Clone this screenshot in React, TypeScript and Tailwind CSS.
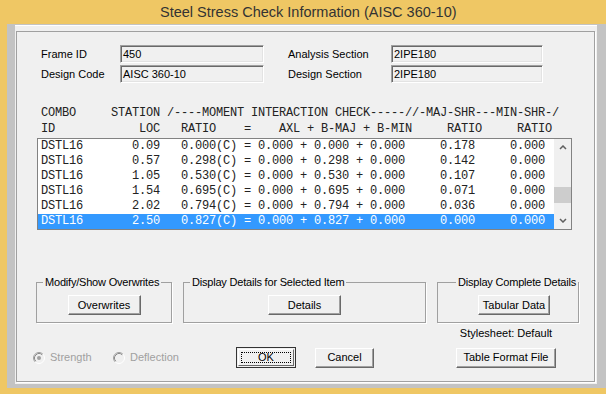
import React from "react"

const rows = [
  ["0.09", "0.000", "0.000", "0.000", "0.000", "0.178", "0.000"],
  ["0.57", "0.298", "0.000", "0.298", "0.000", "0.142", "0.000"],
  ["1.05", "0.530", "0.000", "0.530", "0.000", "0.107", "0.000"],
  ["1.54", "0.695", "0.000", "0.695", "0.000", "0.071", "0.000"],
  ["2.02", "0.794", "0.000", "0.794", "0.000", "0.036", "0.000"],
  ["2.50", "0.827", "0.000", "0.827", "0.000", "0.000", "0.000"],
]

const line = (r: string[]) =>
  `DSTL16${r[0].padStart(11)}   ${r[1]}(C) = ${r[2]} + ${r[3]} + ${r[4]}     ${r[5]}     ${r[6]}`

function Field({ w, children }: { w: string; children: React.ReactNode }) {
  return (
    <div className={`${w} h-[18px] border-t border-l border-[#a0a0a0] border-b border-r border-b-white border-r-white shadow-[inset_1px_1px_0_#696969,inset_-1px_-1px_0_#e3e3e3] pl-[2px] leading-[16px] bg-[#f0f0f0]`}>
      {children}
    </div>
  )
}

function Btn({ w, children }: { w: string; children: React.ReactNode }) {
  return (
    <div className={`${w} h-[20px] flex items-center justify-center bg-[#f0f0f0] border border-t-white border-l-white border-b-[#696969] border-r-[#696969] shadow-[inset_-1px_-1px_0_#a0a0a0]`}>
      {children}
    </div>
  )
}

function Group({ w, title, pad, children }: { w: string; title: string; pad?: string; children: React.ReactNode }) {
  return (
    <fieldset className={`${w} border border-[#a0a0a0] shadow-[1px_1px_0_#fff] px-0 pt-[6px] pb-[7px] ${pad ?? ""}`}>
      <legend className="ml-[6px] px-[2px] leading-[13px] whitespace-nowrap tracking-[-0.2px]">{title}</legend>
      <div className="flex justify-center">{children}</div>
    </fieldset>
  )
}

function Radio({ checked }: { checked?: boolean }) {
  return (
    <svg width="12" height="12" viewBox="0 0 12 12">
      <circle cx="6" cy="6" r="4.5" fill="#f0f0f0" />
      <path d="M9.89 2.11 A5.5 5.5 0 0 0 2.11 9.89" fill="none" stroke="#a0a0a0" />
      <path d="M2.11 9.89 A5.5 5.5 0 0 0 9.89 2.11" fill="none" stroke="#ffffff" />
      <path d="M9.18 2.82 A4.5 4.5 0 0 0 2.82 9.18" fill="none" stroke="#8a8a8a" />
      {checked && <circle cx="6" cy="6" r="2" fill="#a0a0a0" />}
    </svg>
  )
}

function Chevron({ down }: { down?: boolean }) {
  return (
    <svg width="8" height="5" viewBox="0 0 8 5">
      <path d={down ? "M1 1 L4 4 L7 1" : "M1 4 L4 1 L7 4"} fill="none" stroke="#606060" strokeWidth="1.5" />
    </svg>
  )
}

export default function App() {
  return (
    <div className="w-[606px] h-[394px] bg-[#efc764] flex flex-col overflow-hidden font-['Liberation_Sans',Arial,sans-serif] text-[11px] text-black">
      <div className="h-[24px] flex items-center pl-[160px] pt-[1px] text-[14.5px] text-[#333]">
        Steel Stress Check Information (AISC 360-10)
      </div>
      <div className="h-[364px] ml-[7px] bg-[#c3c3c3] pl-[8px] pt-[1px]">
        <div className="w-[582px] h-[359px] bg-[#f0f0f0] border-t border-white pt-[5px] pl-[1px]">
          <div className="w-[579px] h-[351px] border border-[#a0a0a0] shadow-[1px_1px_0_#fff] pl-[16px] pt-[13px]">
            <div className="flex flex-col gap-[2px]">
              <div className="flex items-center h-[18px]">
                <span className="w-[87px] pl-[8px]">Frame ID</span>
                <Field w="w-[144px]">450</Field>
                <span className="w-[103px] ml-[24px]">Analysis Section</span>
                <Field w="w-[152px]">2IPE180</Field>
              </div>
              <div className="flex items-center h-[18px]">
                <span className="w-[87px] pl-[8px]">Design Code</span>
                <Field w="w-[144px]">AISC 360-10</Field>
                <span className="w-[103px] ml-[24px]">Design Section</span>
                <Field w="w-[152px]">2IPE180</Field>
              </div>
            </div>

            <div className="mt-[22px] ml-[8px] font-['Liberation_Mono','Courier_New',monospace] text-[12px] tracking-[-0.2px] leading-[16px] whitespace-pre text-[#222]">
              <div>COMBO     STATION /----MOMENT INTERACTION CHECK-----//-MAJ-SHR---MIN-SHR-/</div>
              <div>ID            LOC   RATIO    =    AXL + B-MAJ + B-MIN     RATIO     RATIO</div>
            </div>

            <div className="mt-[1px] ml-[4px] w-[535px] h-[92px] border border-[#828282] bg-white flex">
              <div className="w-[516px] font-['Liberation_Mono','Courier_New',monospace] text-[12px] tracking-[-0.2px] whitespace-pre">
                {rows.map((r, i) => (
                  <div
                    key={i}
                    className={`h-[15px] leading-[15px] pl-[3px] ${i === rows.length - 1 ? "bg-[#3399ff] text-white" : "text-[#222]"}`}
                  >
                    {line(r)}
                  </div>
                ))}
              </div>
              <div className="w-[17px] bg-[#f0f0f0] flex flex-col">
                <div className="h-[17px] flex items-center justify-center"><Chevron /></div>
                <div className="mt-[31px] h-[16px] bg-[#cdcdcd]" />
                <div className="flex-1" />
                <div className="h-[17px] flex items-center justify-center"><Chevron down /></div>
              </div>
            </div>

            <div className="mt-[46px] ml-[3px] flex items-start">
              <Group w="w-[136px]" title="Modify/Show Overwrites">
                <Btn w="w-[73px]">Overwrites</Btn>
              </Group>
              <Group w="w-[243px] ml-[11px]" title="Display Details for Selected Item">
                <Btn w="w-[73px]">Details</Btn>
              </Group>
              <Group w="w-[126px] ml-[11px]" title="Display Complete Details" pad="pl-[12px]">
                <Btn w="w-[72px]">Tabular Data</Btn>
              </Group>
            </div>

            <div className="mt-[4px] ml-[423px] w-[100px] text-center leading-[13px]">Stylesheet: Default</div>

            <div className="mt-[7px] flex items-center">
              <div className="w-[80px] flex items-center gap-[5px] text-[#a0a0a0]">
                <Radio checked />
                <span>Strength</span>
              </div>
              <div className="w-[123px] flex items-center gap-[5px] text-[#a0a0a0]">
                <Radio />
                <span>Deflection</span>
              </div>
              <div className="w-[60px] h-[21px] border border-[#333] p-[1px]">
                <div className="h-full flex items-center justify-center bg-[#f0f0f0] border border-t-white border-l-white border-b-[#696969] border-r-[#696969] p-[2px]">
                  <div className="w-full h-full border border-dotted border-black flex items-center justify-center leading-none">OK</div>
                </div>
              </div>
              <div className="ml-[19px]"><Btn w="w-[59px]">Cancel</Btn></div>
              <div className="ml-[82px]"><Btn w="w-[100px]">Table Format File</Btn></div>
            </div>
          </div>
        </div>
      </div>
    </div>
  )
}
